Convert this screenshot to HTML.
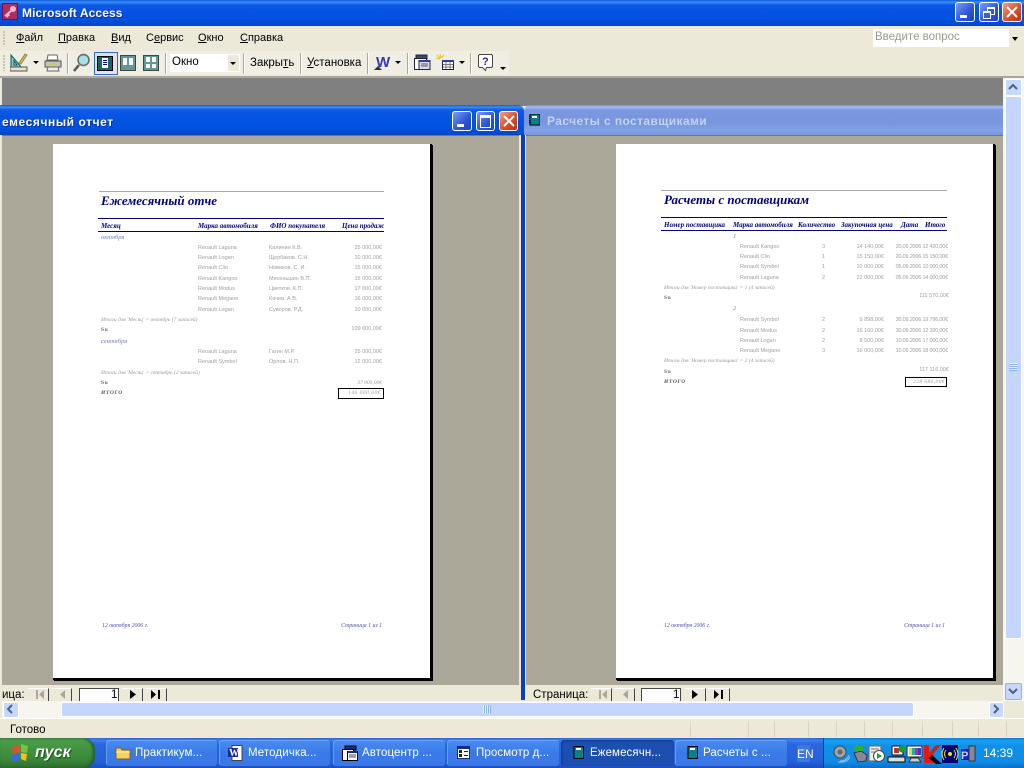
<!DOCTYPE html>
<html><head><meta charset="utf-8"><title>Microsoft Access</title>
<style>
html,body{margin:0;padding:0;width:1024px;height:768px;overflow:hidden;background:#ece9d8;font-family:"Liberation Sans",sans-serif}
.a,.t,svg{position:absolute}
.t{white-space:nowrap;line-height:1}
.m{font-size:11px;color:#000;top:33px}
.b{font-size:11.5px;color:#000;top:58px}
.sep{position:absolute;width:1px;top:53px;height:21px;background:#aca899;border-right:1px solid #fff}
.r{font-size:5.5px;color:#a0a0a0;filter:blur(.2px)}
.dt{letter-spacing:-.2px}
.hd{font:italic bold 7px "Liberation Serif",serif;color:#000080;filter:blur(.2px)}
.it{font:italic 5.5px "Liberation Serif",serif;color:#9a9a9a}
.g{font:italic 6.5px "Liberation Serif",serif;color:#7b7bc0}
.su{font:bold 5.5px "Liberation Serif",serif;color:#666}
.wb{position:absolute;width:18px;height:18px;border:1px solid #fff;border-radius:3px;background:linear-gradient(135deg,#7a9cf0,#2a55d8 60%,#1c44b8)}
.wb.x{background:linear-gradient(135deg,#eea080,#d9512c 55%,#b83210)}
.tb{position:absolute;top:740px;height:26px;border-radius:3px;background:linear-gradient(#4a8cf2,#3a7ae8 50%,#3a78e6);box-shadow:inset 1px 1px 0 #6aa0f5}
.tb.on{background:#1d4fb0;box-shadow:inset 1px 1px 2px #123a8a}
.tt{font-size:11.5px;color:#fff;top:8px;letter-spacing:.1px}
.nb{position:absolute;top:688px;width:20px;height:13px;background:#ece9d8;border-top:1px solid #fff;border-right:1px solid #444}
</style></head><body>

<!-- main title bar -->
<div class="a" style="left:0;top:0;width:1024px;height:26px;background:linear-gradient(#0a5bdc 0,#3c8cf6 2px,#0e5ae6 5px,#0553e2 12px,#0050e0 20px,#0348c8 25px)"></div>
<svg style="left:2px;top:3px" width="16" height="17" viewBox="0 0 16 17"><rect width="16" height="17" fill="#7a0a4a"/><rect x="1" y="1" width="14" height="15" fill="#a83060"/><circle cx="11" cy="6" r="3" fill="#f0b8d0"/><path d="M9 8L3 13M4 12l2 2M6 11l1 2" stroke="#f0b8d0" stroke-width="2" fill="none"/></svg>
<div class="t" style="left:22px;top:7px;font-size:12px;font-weight:bold;color:#fff;letter-spacing:.1px;text-shadow:1px 1px 0 #0a2f9c">Microsoft Access</div>
<div class="wb" style="left:955px;top:2px"><div class="a" style="left:4px;top:12px;width:7px;height:3px;background:#fff"></div></div>
<div class="wb" style="left:979px;top:2px"><div class="a" style="left:7px;top:4px;width:6px;height:5px;border:1px solid #fff;border-top-width:2px"></div><div class="a" style="left:3px;top:8px;width:6px;height:5px;border:1px solid #fff;border-top-width:2px;background:#3a62d8"></div></div>
<div class="wb x" style="left:1002px;top:2px"><svg style="left:3px;top:3px" width="12" height="12"><path d="M1 1L11 11M11 1L1 11" stroke="#fff" stroke-width="2"/></svg></div>

<!-- menu -->
<div class="a" style="left:3px;top:31px;width:2px;height:14px;background:repeating-linear-gradient(#c8c4b0 0 2px,transparent 2px 3px)"></div>
<div class="t m" style="left:16px"><u>Ф</u>айл</div>
<div class="t m" style="left:58px"><u>П</u>равка</div>
<div class="t m" style="left:111px"><u>В</u>ид</div>
<div class="t m" style="left:146px">С<u>е</u>рвис</div>
<div class="t m" style="left:198px"><u>О</u>кно</div>
<div class="t m" style="left:240px"><u>С</u>правка</div>
<div class="a" style="left:873px;top:29px;width:147px;height:18px;background:#fff"></div>
<div class="t" style="left:875px;top:32px;font-size:11.5px;color:#9a9a8c">Введите вопрос</div>
<div class="a" style="left:1009px;top:29px;width:11px;height:18px;background:#ece9d8"></div>
<div class="a" style="left:1012px;top:37px;border:3px solid transparent;border-top:4px solid #000;border-bottom:0"></div>

<!-- toolbar -->
<div class="a" style="left:0;top:51px;width:509px;height:24px;background:#f0eee2"></div>
<div class="a" style="left:3px;top:55px;width:2px;height:16px;background:repeating-linear-gradient(#c8c4b0 0 2px,transparent 2px 3px)"></div>
<svg style="left:10px;top:52px" width="18" height="20" viewBox="0 0 18 20"><path d="M1 17V3L12 16Z M4 13h3L4 9Z" fill="#7fc8c8" stroke="#0a5a5a" fill-rule="evenodd"/><path d="M0 15h17v4H0z" fill="#e8e4c8" stroke="#555"/><path d="M9 11L15 2l2 1-6 9z" fill="#e0c020" stroke="#886"/></svg>
<div class="a" style="left:33px;top:61px;border:3px solid transparent;border-top:3px solid #000;border-bottom:0"></div>
<svg style="left:44px;top:54px" width="18" height="18" viewBox="0 0 18 18"><path d="M4 1h9l1 5H3z" fill="#fff" stroke="#666"/><path d="M1 7h16v6H1z" fill="#c4c4b8" stroke="#555"/><path d="M4 13h10l1 4H3z" fill="#eee" stroke="#666"/><path d="M5 10h6" stroke="#dc0"/></svg>
<div class="sep" style="left:67px"></div>
<svg style="left:73px;top:53px" width="17" height="20" viewBox="0 0 17 20"><circle cx="10.500" cy="7" r="5.500" fill="#a8e0e8" stroke="#666" stroke-width="1.500"/><path d="M6 12L1 18" stroke="#555" stroke-width="2.500"/></svg>
<div class="a" style="left:94px;top:52px;width:22px;height:21px;background:#dfe3ec;border:1px solid #316ac5"></div>
<div class="a" style="left:97px;top:56px;width:16px;height:15px;background:#1a6664;border:1px solid #000;box-sizing:border-box"></div><div class="a" style="left:102px;top:58px;width:6px;height:10px;background:#fff"></div><div class="a" style="left:103px;top:60px;width:4px;height:6px;background:repeating-linear-gradient(#00a 0 1px,#fff 1px 2px)"></div>
<div class="a" style="left:120px;top:55px;width:16px;height:16px;background:#5f9896;border:1px solid #444;box-sizing:border-box"></div><div class="a" style="left:123px;top:58px;width:4px;height:7px;background:#fff"></div><div class="a" style="left:129px;top:58px;width:4px;height:7px;background:#fff"></div>
<div class="a" style="left:143px;top:55px;width:16px;height:16px;background:#5f9896;border:1px solid #444;box-sizing:border-box"></div><div class="a" style="left:146px;top:57px;width:4px;height:5px;background:#fff"></div><div class="a" style="left:152px;top:57px;width:4px;height:5px;background:#fff"></div><div class="a" style="left:146px;top:64px;width:4px;height:4px;background:#fff"></div><div class="a" style="left:152px;top:64px;width:4px;height:4px;background:#fff"></div>
<div class="sep" style="left:165px"></div>
<div class="a" style="left:170px;top:54px;width:70px;height:18px;background:#fff"></div>
<div class="a" style="left:228px;top:55px;width:11px;height:16px;background:#ece9d8"></div>
<div class="a" style="left:230px;top:62px;border:3px solid transparent;border-top:3px solid #000;border-bottom:0"></div>
<div class="t" style="left:172px;top:57px;font-size:11.5px">Окно</div>
<div class="sep" style="left:243px"></div>
<div class="t b" style="left:250px">Закры<u>т</u>ь</div>
<div class="sep" style="left:300px"></div>
<div class="t b" style="left:307px"><u>У</u>становка</div>
<div class="sep" style="left:367px"></div>
<div class="t" style="left:376px;top:54px;font:bold 15px 'Liberation Sans',sans-serif;color:#3838b8">W</div>
<div class="a" style="left:374px;top:66px;border:4px solid transparent;border-bottom:4px solid #333;border-top:0"></div>
<div class="a" style="left:395px;top:61px;border:3px solid transparent;border-top:3px solid #000;border-bottom:0"></div>
<div class="sep" style="left:407px"></div>
<svg style="left:414px;top:54px" width="17" height="17" viewBox="0 0 17 17"><path d="M2 1h11v4H2z" fill="#446" stroke="#224"/><path d="M.5 4.500h12v11H.5z" fill="#fff" stroke="#224"/><path d="M5 6.500h11v9H5z" fill="#dde" stroke="#224"/><path d="M5 6h11v2H5z" fill="#24a"/><path d="M7 10h7M7 12h7" stroke="#555"/></svg>
<svg style="left:436px;top:54px" width="20" height="17" viewBox="0 0 20 17"><path d="M4 0l1 4M0 4l4 1M8 1L5 4M1 1l3 3" stroke="#e0c030"/><path d="M6.500 6.500h11v9h-11z" fill="#fff" stroke="#224"/><path d="M6 6h12v2H6z" fill="#24a"/><path d="M7 10.500h10M7 13h10M10 8v7M14 8v7" stroke="#777"/></svg>
<div class="a" style="left:459px;top:61px;border:3px solid transparent;border-top:3px solid #000;border-bottom:0"></div>
<div class="sep" style="left:470px"></div>
<svg style="left:478px;top:54px" width="16" height="18" viewBox="0 0 16 18"><path d="M1.500.5h12l1 1v11l-1 1h-5l-1 3-3-3h-3l-1-1v-11z" fill="#fff" stroke="#444"/><text x="4" y="11" font-family="Liberation Sans" font-weight="bold" font-size="11" fill="#2a2aa0">?</text></svg>
<div class="a" style="left:500px;top:67px;border:3px solid transparent;border-top:3px solid #000;border-bottom:0"></div>

<!-- MDI -->
<div class="a" style="left:0;top:76px;width:1024px;height:2px;background:#aca899"></div>
<div class="a" style="left:2px;top:78px;width:1001px;height:28px;background:#808080"></div>
<div class="a" style="left:0;top:78px;width:2px;height:640px;background:#ece9d8"></div>

<!-- left window -->
<div class="a" style="left:0;top:105px;width:524px;height:30px;background:linear-gradient(#0a5bdc 0,#3c8cf6 2px,#0e5ae6 5px,#0553e2 14px,#0050e0 24px,#0348c8 29px);border-radius:0 6px 0 0"></div>
<div class="t" style="left:2px;top:116px;font-size:12px;font-weight:bold;color:#fff;letter-spacing:.58px;text-shadow:1px 1px 0 #0a2f9c">емесячный отчет</div>
<div class="wb" style="left:452px;top:111px;width:18px"><div class="a" style="left:4px;top:12px;width:7px;height:3px;background:#fff"></div></div>
<div class="wb" style="left:476px;top:111px;width:17px"><div class="a" style="left:3px;top:3px;width:9px;height:9px;border:1px solid #fff;border-top-width:3px"></div></div>
<div class="wb x" style="left:499px;top:111px;width:17px"><svg style="left:3px;top:3px" width="12" height="12"><path d="M1 1L11 11M11 1L1 11" stroke="#fff" stroke-width="2"/></svg></div>
<div class="a" style="left:2px;top:135px;width:519px;height:550px;background:#aca899;border-top:1px solid #7c7864;box-sizing:border-box"></div>
<div class="a" style="left:519px;top:135px;width:2px;height:553px;background:#ece9d8"></div>
<div class="a" style="left:521px;top:135px;width:4px;height:565px;background:#0a3ccc"></div>
<div class="a" style="left:53px;top:144px;width:377px;height:534px;background:#fff;border-right:2px solid #000;border-bottom:2px solid #000;box-shadow:1px 1px 0 #000"></div>

<div class="a" style="left:99px;top:191px;width:285px;height:1px;background:#aaa"></div>
<div class="t" style="left:101px;top:193px;font:italic bold 13px 'Liberation Serif',serif;color:#000080">Ежемесячный отче</div>
<div class="a" style="left:98px;top:218px;width:286px;height:1px;background:#000080"></div>
<div class="a" style="left:98px;top:231px;width:286px;height:1px;background:#000080"></div>
<div class="t hd" style="left:101px;top:222px">Месяц</div>
<div class="t hd" style="left:198px;top:222px">Марка автомобиля</div>
<div class="t hd" style="left:270px;top:222px">ФИО покупателя</div>
<div class="a" style="left:340px;top:220px;width:44px;height:10px;overflow:hidden"><div class="t hd" style="left:2px;top:2px">Цена продажи</div></div>
<div class="t g" style="left:101px;top:234px">октября</div>
<div class="t g" style="left:101px;top:338px">сентября</div>

<div class="t r" style="left:198px;top:246px">Renault Laguna</div><div class="t r" style="left:269px;top:246px">Калинин К.В.</div><div class="t r" style="right:642px;top:246px">25 000,00€</div>
<div class="t r" style="left:198px;top:256px">Renault Logan</div><div class="t r" style="left:269px;top:256px">Щербаков. С.Н.</div><div class="t r" style="right:642px;top:256px">10 000,00€</div>
<div class="t r" style="left:198px;top:266px">Renault Clio</div><div class="t r" style="left:269px;top:266px">Новиков. С. И.</div><div class="t r" style="right:642px;top:266px">15 000,00€</div>
<div class="t r" style="left:198px;top:277px">Renault Kangoo</div><div class="t r" style="left:269px;top:277px">Мясеньшин В.П.</div><div class="t r" style="right:642px;top:277px">15 000,00€</div>
<div class="t r" style="left:198px;top:287px">Renault Modus</div><div class="t r" style="left:269px;top:287px">Цветков. К.П.</div><div class="t r" style="right:642px;top:287px">17 000,00€</div>
<div class="t r" style="left:198px;top:297px">Renault Megane</div><div class="t r" style="left:269px;top:297px">Кочев. А.В.</div><div class="t r" style="right:642px;top:297px">16 000,00€</div>
<div class="t r" style="left:198px;top:308px">Renault Logan</div><div class="t r" style="left:269px;top:308px">Суворов. Р.Д.</div><div class="t r" style="right:642px;top:308px">10 000,00€</div>
<div class="t it" style="left:101px;top:317px">Итоги для 'Месяц' = октябрь (7 записей)</div>
<div class="t su" style="left:101px;top:327px;letter-spacing:.6px">Su</div><div class="t r" style="right:642px;top:327px">109 000,00€</div>
<div class="t r" style="left:198px;top:350px">Renault Laguna</div><div class="t r" style="left:269px;top:350px">Гагин М.Р.</div><div class="t r" style="right:642px;top:350px">25 000,00€</div>
<div class="t r" style="left:198px;top:360px">Renault Symbol</div><div class="t r" style="left:269px;top:360px">Орлов. Н.П.</div><div class="t r" style="right:642px;top:360px">12 000,00€</div>
<div class="t it" style="left:101px;top:370px">Итоги для 'Месяц' = сентябрь (2 записей)</div>
<div class="t su" style="left:101px;top:380px;letter-spacing:.6px">Su</div><div class="t it" style="right:642px;top:380px">37 000,00€</div>
<div class="t" style="left:101px;top:390px;font:italic bold 5.5px 'Liberation Serif',serif;color:#555;letter-spacing:.6px">ИТОГО</div>
<div class="a" style="left:338px;top:388px;width:44px;height:9px;border:1px solid #000"></div>
<div class="t it" style="right:643px;top:390px;letter-spacing:.5px">146 000,00€</div>
<div class="t g" style="left:102px;top:623px;color:#5050b0;font-size:5.8px">12 октября 2006 г.</div>
<div class="t g" style="right:642px;top:623px;color:#5050b0;font-size:5.8px">Страница 1 из 1</div>

<!-- left nav -->
<div class="a" style="left:2px;top:685px;width:519px;height:16px;background:#ece9d8"></div>
<div class="t" style="left:2px;top:690px;font-size:11.5px;color:#000">ица:</div>
<div class="nb" style="left:28px;color:#aaa"></div><div class="nb" style="left:51px"></div><div class="nb" style="left:122px"></div><div class="nb" style="left:145px;width:21px"></div>
<svg style="left:36px;top:690px" width="9" height="10"><path d="M0 0h2v9H0zM8 0v9L3 4.500z" fill="#aca899"/></svg>
<svg style="left:59px;top:690px" width="7" height="10"><path d="M6 0v9L1 4.500z" fill="#aca899"/></svg>
<svg style="left:130px;top:690px" width="7" height="10"><path d="M0 0v9l6-4.500z" fill="#000"/></svg>
<svg style="left:151px;top:690px" width="10" height="10"><path d="M0 0v9l5-4.500zM7 0h2v9H7z" fill="#000"/></svg>
<div class="a" style="left:79px;top:688px;width:38px;height:13px;background:#fff;border:1px solid #444;border-bottom:0"></div>
<div class="t" style="left:111px;top:690px;font-size:11.5px">1</div>

<!-- right window -->
<div class="a" style="left:524px;top:105px;width:479px;height:30px;background:linear-gradient(#7590d8 0,#a4bcf0 2px,#7c97e0 5px,#7896dd 18px,#82a2e6 26px,#7892d8 30px);border-radius:6px 0 0 0"></div>
<svg style="left:529px;top:114px" width="11" height="12" viewBox="0 0 11 12"><path d="M1 0h10v11H1z" fill="#0a8088" stroke="#000"/><path d="M3 2h5v2H3z" fill="#fff"/><path d="M0 2v8" stroke="#000" stroke-dasharray="1 1"/></svg>
<div class="t" style="left:547px;top:115px;font-size:12px;font-weight:bold;color:#c2d2f4;letter-spacing:.4px">Расчеты с поставщиками</div>
<div class="a" style="left:526px;top:135px;width:477px;height:550px;background:#aca899;border-top:1px solid #7c7864;box-sizing:border-box"></div>
<div class="a" style="left:616px;top:144px;width:377px;height:534px;background:#fff;border-right:2px solid #000;border-bottom:2px solid #000;box-shadow:1px 1px 0 #000"></div>

<div class="a" style="left:661px;top:190px;width:286px;height:1px;background:#aaa"></div>
<div class="t" style="left:664px;top:192px;font:italic bold 13px 'Liberation Serif',serif;color:#000080">Расчеты с поставщикам</div>
<div class="a" style="left:661px;top:217px;width:286px;height:1px;background:#000080"></div>
<div class="a" style="left:661px;top:230px;width:286px;height:1px;background:#000080"></div>
<div class="t hd" style="left:664px;top:221px">Номер поставщика</div>
<div class="t hd" style="left:733px;top:221px">Марка автомобиля</div>
<div class="t hd" style="left:798px;top:221px">Количество</div>
<div class="t hd" style="left:841px;top:221px">Закупочная цена</div>
<div class="t hd" style="left:901px;top:221px">Дата</div>
<div class="t hd" style="left:925px;top:221px">Итого</div>
<div class="t g" style="left:733px;top:233px">1</div>
<div class="t g" style="left:733px;top:305px">2</div>

<div class="t r" style="left:740px;top:245px">Renault Kangoo</div><div class="t r" style="left:822px;top:245px">3</div><div class="t r" style="right:140px;top:245px">14 140,00€</div><div class="t r dt" style="right:76px;top:245px">20.09.2006 12 420,00€</div>
<div class="t r" style="left:740px;top:255px">Renault Clio</div><div class="t r" style="left:822px;top:255px">1</div><div class="t r" style="right:140px;top:255px">15 150,00€</div><div class="t r dt" style="right:76px;top:255px">20.09.2006 15 150,00€</div>
<div class="t r" style="left:740px;top:265px">Renault Symbol</div><div class="t r" style="left:822px;top:265px">1</div><div class="t r" style="right:140px;top:265px">10 000,00€</div><div class="t r dt" style="right:76px;top:265px">05.09.2006 10 000,00€</div>
<div class="t r" style="left:740px;top:276px">Renault Laguna</div><div class="t r" style="left:822px;top:276px">2</div><div class="t r" style="right:140px;top:276px">22 000,00€</div><div class="t r dt" style="right:76px;top:276px">05.09.2006 14 000,00€</div>
<div class="t it" style="left:664px;top:285px">Итоги для 'Номер поставщика' = 1 (4 записей)</div>
<div class="t su" style="left:664px;top:295px;letter-spacing:.6px">Su</div><div class="t r" style="right:75px;top:294px">111 570,00€</div>
<div class="t r" style="left:740px;top:318px">Renault Symbol</div><div class="t r" style="left:822px;top:318px">2</div><div class="t r" style="right:140px;top:318px">9 898,00€</div><div class="t r dt" style="right:76px;top:318px">30.09.2006 19 796,00€</div>
<div class="t r" style="left:740px;top:329px">Renault Modus</div><div class="t r" style="left:822px;top:329px">2</div><div class="t r" style="right:140px;top:329px">16 160,00€</div><div class="t r dt" style="right:76px;top:329px">30.09.2006 12 320,00€</div>
<div class="t r" style="left:740px;top:339px">Renault Logan</div><div class="t r" style="left:822px;top:339px">2</div><div class="t r" style="right:140px;top:339px">8 500,00€</div><div class="t r dt" style="right:76px;top:339px">10.09.2006 17 000,00€</div>
<div class="t r" style="left:740px;top:349px">Renault Megane</div><div class="t r" style="left:822px;top:349px">3</div><div class="t r" style="right:140px;top:349px">16 000,00€</div><div class="t r dt" style="right:76px;top:349px">10.09.2006 18 000,00€</div>
<div class="t it" style="left:664px;top:358px">Итоги для 'Номер поставщика' = 2 (4 записей)</div>
<div class="t su" style="left:664px;top:369px;letter-spacing:.6px">Su</div><div class="t r" style="right:75px;top:368px">117 116,00€</div>
<div class="t" style="left:664px;top:379px;font:italic bold 5.5px 'Liberation Serif',serif;color:#555;letter-spacing:.6px">ИТОГО</div>
<div class="a" style="left:905px;top:377px;width:40px;height:8px;border:1px solid #000"></div>
<div class="t it" style="right:79px;top:379px;letter-spacing:.4px">228 686,00€</div>
<div class="t g" style="left:664px;top:623px;color:#5050b0;font-size:5.8px">12 октября 2006 г.</div>
<div class="t g" style="right:79px;top:623px;color:#5050b0;font-size:5.8px">Страница 1 из 1</div>

<!-- right nav -->
<div class="a" style="left:525px;top:685px;width:478px;height:16px;background:#ece9d8"></div>
<div class="t" style="left:533px;top:690px;font-size:11.5px;color:#000">Страница:</div>
<div class="nb" style="left:591px"></div><div class="nb" style="left:614px"></div><div class="nb" style="left:685px"></div><div class="nb" style="left:708px;width:21px"></div>
<svg style="left:599px;top:690px" width="9" height="10"><path d="M0 0h2v9H0zM8 0v9L3 4.500z" fill="#aca899"/></svg>
<svg style="left:622px;top:690px" width="7" height="10"><path d="M6 0v9L1 4.500z" fill="#aca899"/></svg>
<svg style="left:692px;top:690px" width="7" height="10"><path d="M0 0v9l6-4.500z" fill="#000"/></svg>
<svg style="left:714px;top:690px" width="10" height="10"><path d="M0 0v9l5-4.500zM7 0h2v9H7z" fill="#000"/></svg>
<div class="a" style="left:641px;top:688px;width:38px;height:13px;background:#fff;border:1px solid #444;border-bottom:0"></div>
<div class="t" style="left:673px;top:690px;font-size:11.5px">1</div>

<!-- vertical scrollbar -->
<div class="a" style="left:1003px;top:78px;width:21px;height:623px;background:#f6f5ee"></div>
<div class="a" style="left:1005px;top:79px;width:15px;height:15px;background:#c8d8fa;border:1px solid #fff;border-radius:2px"></div>
<svg style="left:1008px;top:83px" width="11" height="8"><path d="M1 6L5 2l4 4" stroke="#4d6185" stroke-width="2" fill="none"/></svg>
<div class="a" style="left:1005px;top:96px;width:15px;height:541px;background:#c4d6fb;border:1px solid #fff;border-radius:2px"></div>
<div class="a" style="left:1009px;top:363px;width:8px;height:8px;background:repeating-linear-gradient(#eef4ff 0 1px,#8cb0f8 1px 2px)"></div>
<div class="a" style="left:1005px;top:683px;width:15px;height:15px;background:#c8d8fa;border:1px solid #9ab0e0;border-radius:2px"></div>
<svg style="left:1008px;top:687px" width="11" height="8"><path d="M1 2l4 4 4-4" stroke="#4d6185" stroke-width="2" fill="none"/></svg>

<!-- horizontal scrollbar -->
<div class="a" style="left:2px;top:701px;width:1001px;height:17px;background:#f6f5ee"></div>
<div class="a" style="left:3px;top:702px;width:14px;height:14px;background:#c8d8fa;border:1px solid #fff;border-radius:2px"></div>
<svg style="left:6px;top:704px" width="9" height="11"><path d="M6 1L2 5l4 4" stroke="#4d6185" stroke-width="2" fill="none"/></svg>
<div class="a" style="left:61px;top:702px;width:851px;height:13px;background:#c4d6fb;border:1px solid #fff;border-radius:2px"></div>
<div class="a" style="left:483px;top:705px;width:8px;height:8px;background:repeating-linear-gradient(90deg,#eef4ff 0 1px,#8cb0f8 1px 2px)"></div>
<div class="a" style="left:989px;top:702px;width:13px;height:14px;background:#c8d8fa;border:1px solid #fff;border-radius:2px"></div>
<svg style="left:992px;top:704px" width="9" height="11"><path d="M2 1l4 4-4 4" stroke="#4d6185" stroke-width="2" fill="none"/></svg>

<!-- status -->
<div class="a" style="left:0;top:718px;width:1024px;height:20px;background:#ece9d8;border-top:1px solid #fff;box-sizing:border-box"></div>
<div class="t" style="left:10px;top:725px;font-size:11.5px;color:#000">Готово</div>
<div class="a" style="left:690px;top:721px;width:1px;height:16px;background:#d8d4c0;box-shadow:58px 0 #d8d4c0,84px 0 #d8d4c0,118px 0 #d8d4c0,146px 0 #d8d4c0,174px 0 #d8d4c0,202px 0 #d8d4c0,232px 0 #d8d4c0,262px 0 #d8d4c0,288px 0 #d8d4c0,316px 0 #d8d4c0"></div>

<!-- taskbar -->
<div class="a" style="left:0;top:738px;width:1024px;height:30px;background:linear-gradient(#2a62d8 0,#3f80ee 2px,#2a66de 6px,#2560d8 24px,#1c4cc0 30px)"></div>
<div class="a" style="left:0;top:738px;width:95px;height:30px;border-radius:0 12px 12px 0;background:linear-gradient(#5a9a58 0,#4a9c48 4px,#3c8a3c 20px,#2f6f30 30px);box-shadow:inset -2px 0 3px #1f5a20"></div>
<svg style="left:11px;top:743px" width="18" height="20" viewBox="0 0 18 20"><path d="M1 4l7-2 1 7-7 2z" fill="#e0502c"/><path d="M10 1l7 2-1 7-6-1z" fill="#7cc040"/><path d="M1 12l7-2 1 7-8 2z" fill="#3a6cd8"/><path d="M10 10l6 1-1 7-5-2z" fill="#f4c020"/></svg>
<div class="t" style="left:35px;top:745px;font-size:16px;font-weight:bold;font-style:italic;color:#fff;text-shadow:1px 1px 1px #1a4a1a">пуск</div>

<div class="tb" style="left:106px;width:111px"><svg style="left:9px;top:6px" width="16" height="14" viewBox="0 0 16 14"><path d="M1 2h5l1 2h8v9H1z" fill="#f4d060" stroke="#806018"/><path d="M1 6h14" stroke="#fff0b0"/></svg><div class="t tt" style="left:29px">Практикум...</div></div>
<div class="tb" style="left:219px;width:111px"><svg style="left:9px;top:5px" width="16" height="16" viewBox="0 0 16 16"><path d="M4 .5h10v15H4z" fill="#fff" stroke="#444"/><path d="M0 3h10v9H0z" fill="#1a2a9c"/><text x="1" y="11" font-family="Liberation Serif" font-weight="bold" font-size="10" fill="#fff">W</text></svg><div class="t tt" style="left:29px">Методичка...</div></div>
<div class="tb" style="left:333px;width:112px"><svg style="left:9px;top:5px" width="16" height="16" viewBox="0 0 16 16"><path d="M3 1h11v4H3z" fill="#122a88" stroke="#000"/><path d="M.5 4.500h11v11H.5z" fill="#fff" stroke="#000"/><path d="M5.500 6.500h10v9h-10z" fill="#fff" stroke="#000"/><path d="M6 6h9v2H6z" fill="#122a88"/><path d="M7 10h7M7 12h7" stroke="#444"/></svg><div class="t tt" style="left:29px">Автоцентр ...</div></div>
<div class="tb" style="left:447px;width:112px"><svg style="left:10px;top:6px" width="13" height="13" viewBox="0 0 13 13"><path d="M0 0h13v13H0z" fill="#122a88"/><path d="M1 3h11v9H1z" fill="#fff"/><path d="M2 4h3v3H2zM2 8h3v3H2zM7 5h4v1H7zM7 9h4v1H7z" fill="#222"/></svg><div class="t tt" style="left:29px">Просмотр д...</div></div>
<div class="tb on" style="left:561px;width:113px"><svg style="left:12px;top:6px" width="11" height="13" viewBox="0 0 11 13"><path d="M1 .5h9.500v12H1z" fill="#0a8088" stroke="#000"/><path d="M3 2h5v2H3z" fill="#fff"/></svg><div class="t tt" style="left:29px">Ежемесячн...</div></div>
<div class="tb" style="left:675px;width:112px"><svg style="left:12px;top:6px" width="11" height="13" viewBox="0 0 11 13"><path d="M1 .5h9.500v12H1z" fill="#0a8088" stroke="#000"/><path d="M3 2h5v2H3z" fill="#fff"/></svg><div class="t tt" style="left:28px">Расчеты с ...</div></div>
<div class="a" style="left:797px;top:745px;width:13px;height:17px;background:#3d78e0"></div>
<div class="t" style="left:797px;top:748px;font-size:12px;color:#fff">EN</div>

<div class="a" style="left:823px;top:738px;width:201px;height:30px;background:linear-gradient(#0c7cd8 0,#18a0f0 3px,#1090e8 8px,#0f8ce6 24px,#0a6cc8 30px);border-left:1px solid #0a3a90;box-sizing:border-box"></div>
<svg style="left:833px;top:744px" width="146" height="20" viewBox="0 0 146 20">
<circle cx="7" cy="8" r="6" fill="#a0a4a8" stroke="#444"/><circle cx="7" cy="8" r="2.500" fill="#666"/><path d="M7 17q7 0 9-6M5 18q9 1 12-5" stroke="#9fc0f0" fill="none"/>
<path d="M21 9l7-2 6 4-1 6-8 1z" fill="#889" stroke="#334"/><path d="M20 4l5-4v2h5v5h-5v2z" fill="#30b030"/>
<path d="M36 2h12v15H36z" fill="#eee" stroke="#666"/><path d="M38 5h8M38 8h8" stroke="#777"/><circle cx="46" cy="12" r="5.500" fill="#fff" stroke="#444"/><path d="M44 9v6l5-3z" fill="#10a040"/>
<path d="M59 2h11v9H59z" fill="#fff" stroke="#000"/><path d="M61 4h5v5h-5z" fill="#c03030"/><path d="M55 13h17v5H55z" fill="#ddd" stroke="#000"/><circle cx="69" cy="5" r="3.500" fill="#10a030"/>
<path d="M74 2h15v11H74z" fill="#fff" stroke="#222"/><path d="M76 4h3v7h-3z" fill="#e0e020"/><path d="M79 4h3v7h-3z" fill="#20b0b0"/><path d="M82 4h3v7h-3z" fill="#d020a0"/><path d="M85 4h3v7h-3z" fill="#2040d0"/><path d="M78 14h7l3 4H76z" fill="#ccc" stroke="#333"/>
<path d="M91 1h5v8l7-8h5l-8 9 2 9H91z" fill="#e01818"/><path d="M99 11l10 9h-6l-7-6z" fill="#000"/>
<path d="M109 1h16v18h-16z" fill="#000070"/><circle cx="117" cy="10" r="2" fill="#f0e020"/><path d="M113 6q-3 4 0 8M121 6q3 4 0 8M111 4q-4 6 0 12M123 4q4 6 0 12" stroke="#f0e020" fill="none"/>
<path d="M128 5h9v11h-9z" fill="#1818d8"/><text x="128" y="15" font-size="11" font-weight="bold" fill="#d0d0ff" font-family="Liberation Sans">P</text><path d="M136 2h6v15h-6z" fill="#889" stroke="#333"/>
</svg>
<div class="t" style="left:983px;top:747px;font-size:12px;color:#fff">14:39</div>

</body></html>
